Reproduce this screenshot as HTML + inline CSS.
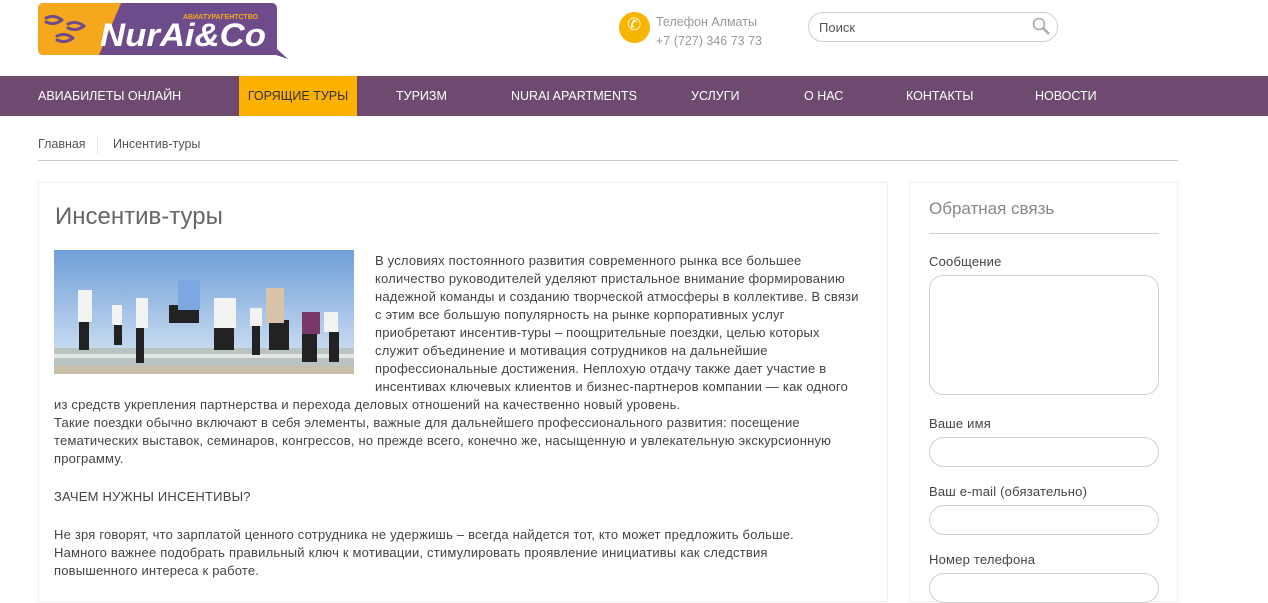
<!DOCTYPE html>
<html><head><meta charset="utf-8"><style>
*{margin:0;padding:0;box-sizing:border-box}
body{width:1268px;height:579px;overflow:hidden;background:#fff;font-family:"Liberation Sans","DejaVu Sans",sans-serif;color:#444;position:relative}
.a{position:absolute;white-space:nowrap}
.header{position:absolute;left:0;top:0;width:1268px;height:76px;background:#fff}
.nav{position:absolute;left:0;top:76px;width:1268px;height:40px;background:#6f4a70}
.nav span{position:absolute;top:0;height:40px;line-height:40px;color:#fff;font-size:12.5px}
.crumb{position:absolute;left:0;top:116px;width:1268px;height:66px;background:#fff}
.box{position:absolute;background:#fff;border:1px solid #f0f0f0}
.t{font-size:13px;line-height:18px;color:#444;letter-spacing:0.2px}
.in{position:absolute;left:929px;width:230px;border:1px solid #cfcfcf;background:#fff}
</style></head><body>
<div class="header">
 <svg class="a" style="left:38px;top:3px" width="252" height="58" viewBox="0 0 252 58">
  <path d="M5 0H234A5 5 0 0 1 239 5V46L250 56L238 52H5A5 5 0 0 1 0 47V5A5 5 0 0 1 5 0Z" fill="#6e4c8c"/>
  <path d="M5 0H83L61 52H5A5 5 0 0 1 0 47V5A5 5 0 0 1 5 0Z" fill="#f6a81c"/>
  <g fill="none" stroke="#6e4c8c" stroke-width="3" stroke-linecap="round">
   <path d="M8 15q8-4 16 2M8 19q8 4 16-2"/><path d="M19 33q8-4 16 2M19 37q8 4 16-2"/><path d="M30 21q8-4 16 2M30 25q8 4 16-2"/>
  </g>
  <text x="145" y="16" font-size="7" font-weight="bold" fill="#f6a81c" font-family="Liberation Sans">АВИАТУРАГЕНТСТВО</text>
  <text x="62" y="43" font-size="32" font-weight="bold" font-style="italic" fill="#fff" font-family="Liberation Sans" textLength="166" lengthAdjust="spacingAndGlyphs">NurAi&amp;Co</text>
 </svg>
 <div class="a" style="left:619px;top:12px;width:31px;height:31px;border-radius:50%;background:#f7b500"></div>
 <div class="a" style="left:627px;top:15px;color:#fff;font-size:17px">✆</div>
 <div class="a" style="left:656px;top:13px;font-size:12.5px;color:#999;line-height:19px">Телефон Алматы<br>+7 (727) 346 73 73</div>
 <div class="a" style="left:808px;top:12px;width:250px;height:30px;border:1px solid #cfcfcf;border-radius:15px"></div>
 <div class="a" style="left:819px;top:20px;font-size:13px;color:#555">Поиск</div>
 <svg class="a" style="left:1031px;top:16px" width="20" height="20"><circle cx="8" cy="8" r="5.5" fill="none" stroke="#aaa" stroke-width="1.6"/><path d="M12 12l6 6" stroke="#aaa" stroke-width="2.5"/></svg>
</div>
<div class="nav">
 <span style="left:38px">АВИАБИЛЕТЫ ОНЛАЙН</span>
 <span style="left:239px;width:118px;background:#fdb100;color:#333;text-align:center">ГОРЯЩИЕ ТУРЫ</span>
 <span style="left:396px">ТУРИЗМ</span>
 <span style="left:511px">NURAI APARTMENTS</span>
 <span style="left:691px">УСЛУГИ</span>
 <span style="left:804px">О НАС</span>
 <span style="left:906px">КОНТАКТЫ</span>
 <span style="left:1035px">НОВОСТИ</span>
</div>
<div class="crumb">
 <div class="a" style="left:38px;top:21px;font-size:12.5px;color:#555">Главная</div>
 <div class="a" style="left:97px;top:20px;width:1px;height:18px;background:#e5e5e5"></div>
 <div class="a" style="left:113px;top:21px;font-size:12.5px;color:#555">Инсентив-туры</div>
 <div class="a" style="left:38px;top:44px;width:1140px;height:1px;background:#ccc"></div>
</div>
<div class="box" style="left:38px;top:182px;width:850px;height:420px"></div>
<div class="box" style="left:909px;top:182px;width:269px;height:420px"></div>
<div class="a" style="left:55px;top:203px;font-size:24px;color:#666">Инсентив-туры</div>
<svg class="a" style="left:54px;top:250px" width="300" height="124" viewBox="0 0 300 124">
 <defs><linearGradient id="s" x1="0" y1="0" x2="0" y2="1"><stop offset="0" stop-color="#6f9fd8"/><stop offset="1" stop-color="#c6daf0"/></linearGradient></defs>
 <rect width="300" height="100" fill="url(#s)"/>
 <rect y="98" width="300" height="26" fill="#b9c3c0"/>
 <rect y="104" width="300" height="4" fill="#e3e8e6"/>
 <rect y="116" width="300" height="8" fill="#c8bda8"/>
 <g fill="#222"><rect x="25" y="70" width="10" height="30"/><rect x="60" y="70" width="8" height="25"/><rect x="82" y="75" width="8" height="38"/><rect x="115" y="55" width="30" height="18"/><rect x="160" y="70" width="20" height="30"/><rect x="198" y="75" width="8" height="30"/><rect x="215" y="70" width="20" height="30"/><rect x="248" y="82" width="15" height="30"/><rect x="275" y="82" width="10" height="30"/></g>
 <g fill="#f3f3f3"><rect x="24" y="40" width="14" height="32"/><rect x="58" y="55" width="10" height="20"/><rect x="82" y="48" width="12" height="30"/><rect x="160" y="48" width="22" height="30"/><rect x="196" y="58" width="12" height="18"/><rect x="270" y="62" width="14" height="20"/></g>
 <rect x="124" y="30" width="22" height="30" fill="#7da7e0"/>
 <rect x="212" y="38" width="18" height="35" fill="#d8c2a8"/>
 <rect x="248" y="62" width="18" height="22" fill="#7a3868"/>
</svg>
<div class="a t" style="left:375px;top:252px">В условиях постоянного развития современного рынка все большее<br>количество руководителей уделяют пристальное внимание формированию<br>надежной команды и созданию творческой атмосферы в коллективе. В связи<br>с этим все большую популярность на рынке корпоративных услуг<br>приобретают инсентив-туры – поощрительные поездки, целью которых<br>служит объединение и мотивация сотрудников на дальнейшие<br>профессиональные достижения. Неплохую отдачу также дает участие в<br>инсентивах ключевых клиентов и бизнес-партнеров компании — как одного</div>
<div class="a t" style="left:54px;top:396px">из средств укрепления партнерства и перехода деловых отношений на качественно новый уровень.<br>Такие поездки обычно включают в себя элементы, важные для дальнейшего профессионального развития: посещение<br>тематических выставок, семинаров, конгрессов, но прежде всего, конечно же, насыщенную и увлекательную экскурсионную<br>программу.</div>
<div class="a t" style="left:54px;top:488px">ЗАЧЕМ НУЖНЫ ИНСЕНТИВЫ?</div>
<div class="a t" style="left:54px;top:526px">Не зря говорят, что зарплатой ценного сотрудника не удержишь – всегда найдется тот, кто может предложить больше.<br>Намного важнее подобрать правильный ключ к мотивации, стимулировать проявление инициативы как следствия<br>повышенного интереса к работе.</div>
<div class="a" style="left:929px;top:199px;font-size:17px;color:#888">Обратная связь</div>
<div class="a" style="left:929px;top:233px;width:230px;height:1px;background:#ccc"></div>
<div class="a t" style="left:929px;top:253px">Сообщение</div>
<div class="in" style="top:275px;height:120px;border-radius:14px"></div>
<div class="a t" style="left:929px;top:415px">Ваше имя</div>
<div class="in" style="top:437px;height:30px;border-radius:15px"></div>
<div class="a t" style="left:929px;top:483px">Ваш e-mail (обязательно)</div>
<div class="in" style="top:505px;height:30px;border-radius:15px"></div>
<div class="a t" style="left:929px;top:551px">Номер телефона</div>
<div class="in" style="top:573px;height:30px;border-radius:15px"></div>
</body></html>
